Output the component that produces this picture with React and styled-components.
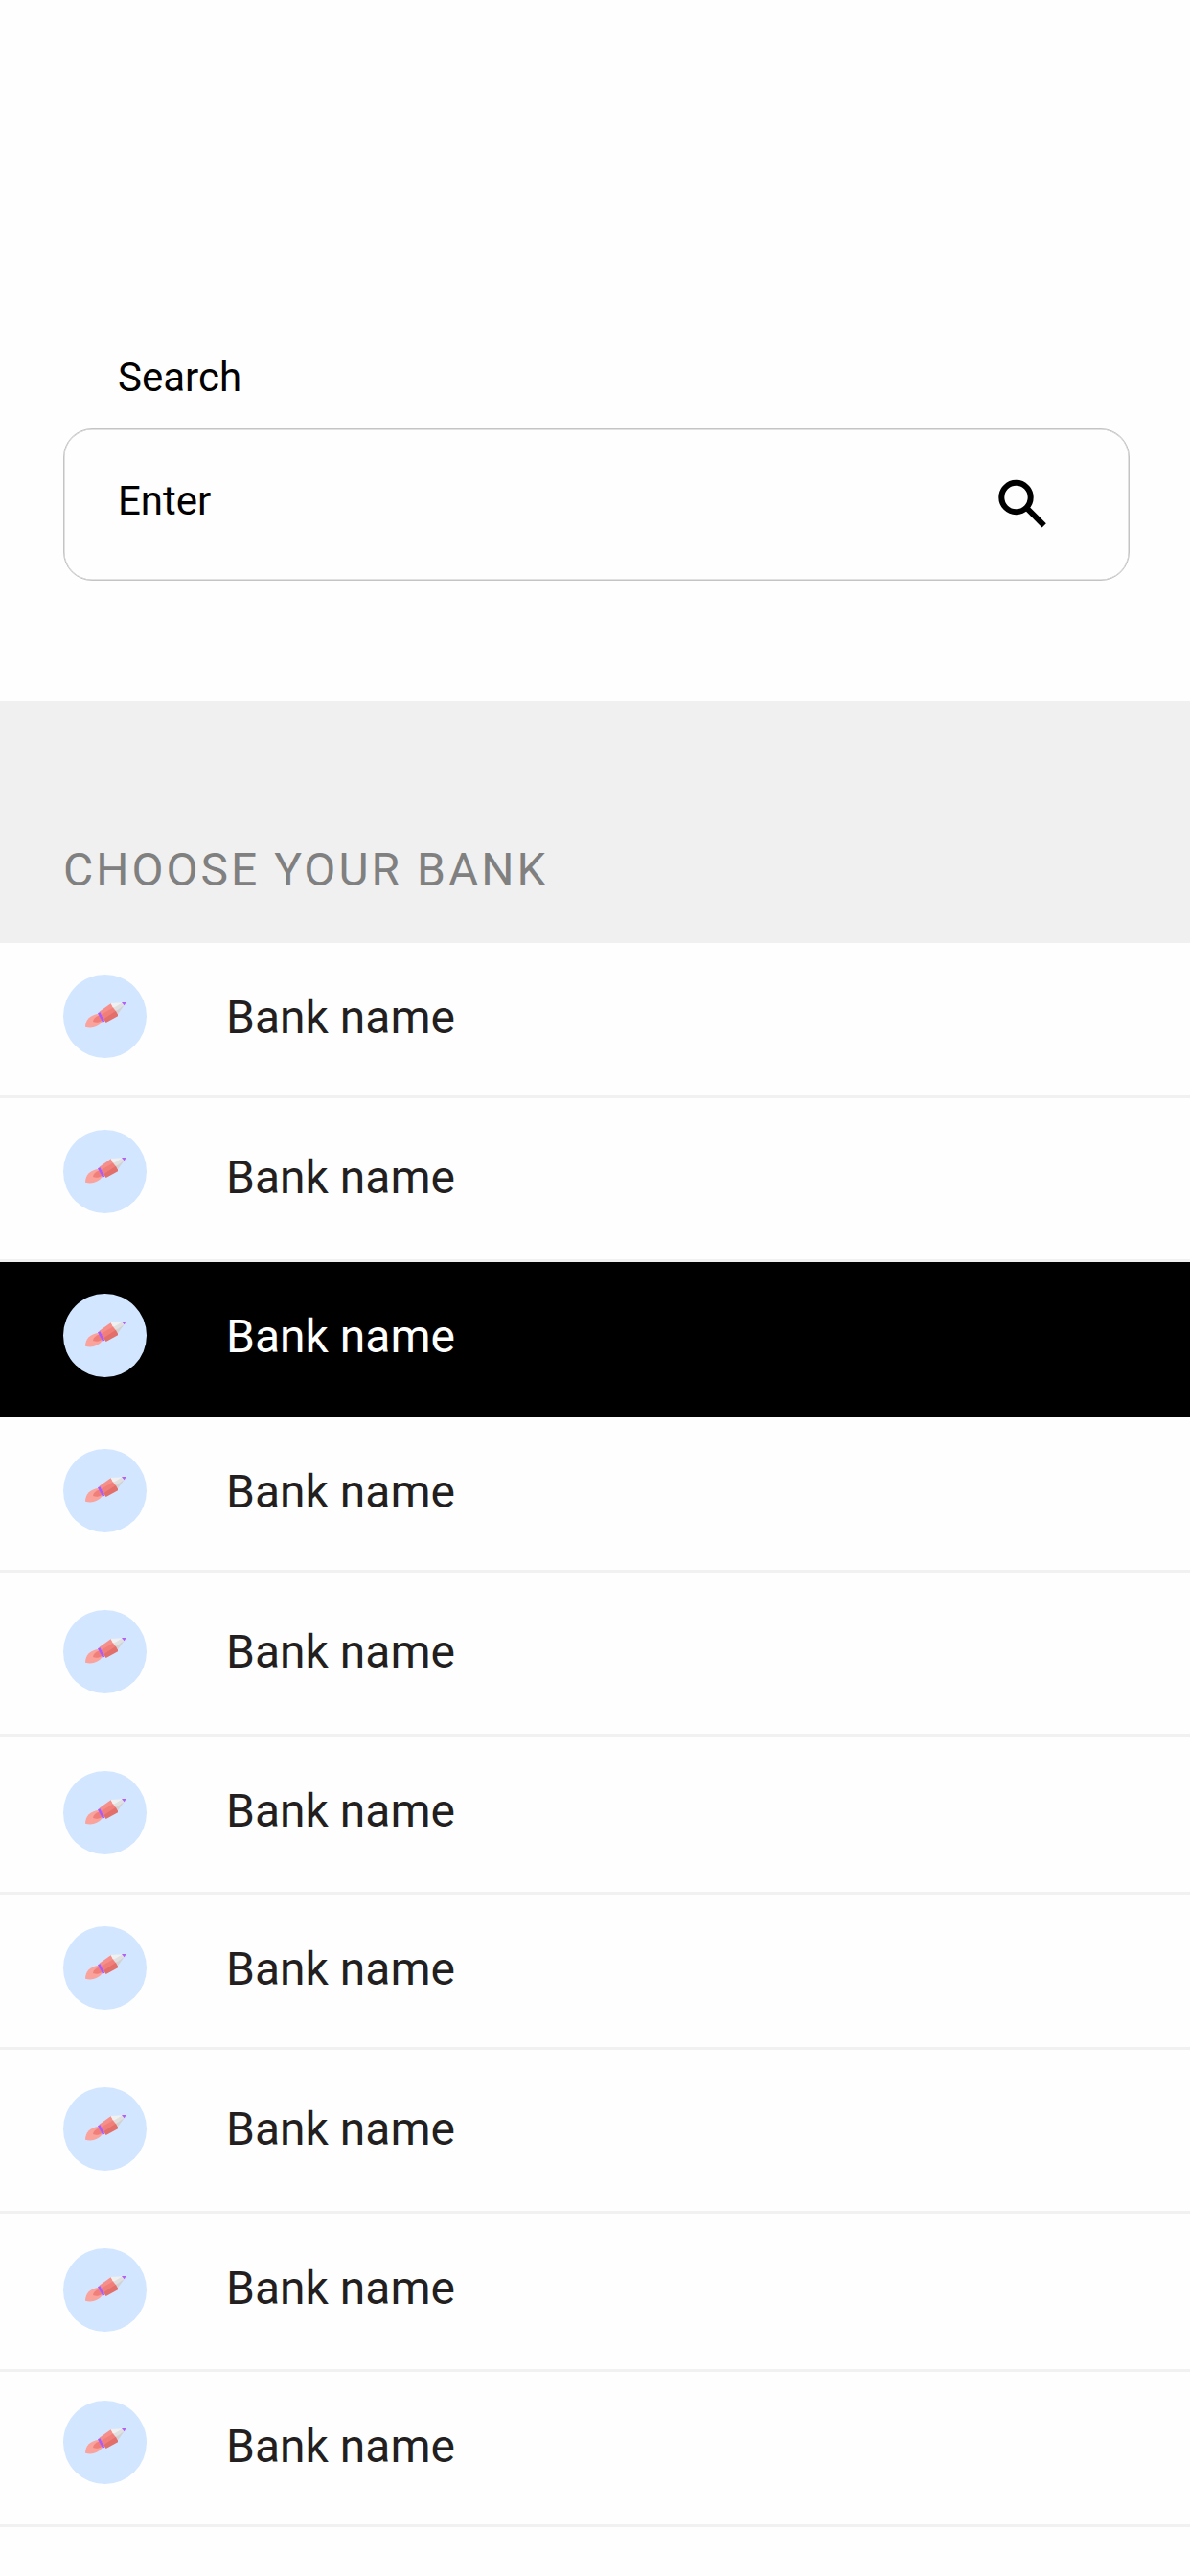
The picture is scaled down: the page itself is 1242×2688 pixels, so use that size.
import React from "react";
import styled, { createGlobalStyle } from "styled-components";

const GlobalStyle = createGlobalStyle`
  * { box-sizing: border-box; }
  html, body { margin: 0; background: #fefefe; }
  body { font-family: Roboto, "Liberation Sans", sans-serif; }
`;

const Screen = styled.main`
  display: flex;
  flex-direction: column;
  width: 1242px;
  height: 2688px;
  background: #fefefe;
  overflow: hidden;
`;

const SearchPanel = styled.section`
  display: flex;
  flex-direction: column;
  height: 732px;
  padding: 369px 63px 0 66px;
`;

const SearchLabel = styled.label`
  padding-left: 57px;
  font-size: 42px;
  line-height: 50px;
  color: #000;
`;

const SearchField = styled.div`
  display: flex;
  align-items: flex-start;
  justify-content: space-between;
  height: 159px;
  margin-top: 28px;
  padding: 47px 78px 0 56px;
  border: 1px solid #c4c4c4;
  border-radius: 30px;
  box-shadow: inset 0 0 0 0.5px #c4c4c4;
`;

const Placeholder = styled.span`
  margin-top: 3px;
  font-size: 42px;
  line-height: 50px;
  color: #000;
`;

const SearchIcon = styled.svg`
  display: block;
  width: 65px;
  height: 60px;
`;

const SectionHeader = styled.header`
  display: flex;
  height: 252px;
  padding: 148px 66px 0;
  background: #f0f0f0;
`;

const SectionTitle = styled.h1`
  margin: 0;
  font-size: 48px;
  font-weight: 400;
  line-height: 56px;
  letter-spacing: 3px;
  color: #808080;
`;

const BankList = styled.ul`
  display: flex;
  flex-direction: column;
  margin: 0;
  padding: 0;
  list-style: none;
`;

const BankRow = styled.li`
  display: flex;
  align-items: flex-start;
  gap: 83px;
  height: ${(p) => p.$height}px;
  padding-left: 66px;
  background: ${(p) => (p.$selected ? "#000" : "#fefefe")};
  color: ${(p) => (p.$selected ? "#fff" : "#231f20")};
  border-bottom: ${(p) => (p.$selected ? "none" : "3px solid #f1f1f1")};
`;

const Avatar = styled.span`
  display: block;
  width: 87px;
  height: 87px;
  margin-top: ${(p) => p.$top}px;
  border-radius: 50%;
  background: #d2e6ff;
`;

const RocketSvg = styled.svg`
  display: block;
  width: 87px;
  height: 87px;
`;

const BankName = styled.span`
  margin-top: ${(p) => p.$top}px;
  font-size: 48px;
  line-height: 56px;
`;

const banks = [
  { height: 162, icon: 33, text: 50 },
  { height: 171, icon: 33, text: 55 },
  { height: 162, icon: 33, text: 50, selected: true },
  { height: 162, icon: 33, text: 50 },
  { height: 171, icon: 39, text: 55 },
  { height: 165, icon: 36, text: 50 },
  { height: 162, icon: 33, text: 50 },
  { height: 171, icon: 39, text: 55 },
  { height: 165, icon: 36, text: 50 },
  { height: 162, icon: 30, text: 50 },
];

function Rocket() {
  return (
    <RocketSvg viewBox="-42 -39 261 261" aria-hidden="true">
      <path d="M27 125C27 101 43 87 68 83L80 109C67 125 47 131 27 125Z" fill="#faa29c" />
      <path d="M51 108C52 99 60 92 71 88L79 105C70 111 60 112 51 108Z" fill="#f07f7a" />
      <path d="M71 77L107 52L116 66L78 88Z" fill="#f68e8a" />
      <path d="M76 86L116 64L127 76L86 103Z" fill="#f07f7a" />
      <path d="M84 100L123 74L129 85L129 91L92 111Z" fill="#e36f6b" />
      <path d="M107 51L144 49L118 66L113 64Z" fill="#f0f0f0" />
      <path d="M115 66L144 49L149 57L123 76Z" fill="#e0e0e0" />
      <path d="M123 75L149 57L129 85Z" fill="#d2d2d2" />
      <path d="M141 48L155 48L149 58Z" fill="#b35ef8" />
      <path d="M66 82L73 78L88 107L81 110Z" fill="#a95cf8" />
    </RocketSvg>
  );
}

export default function App() {
  return (
    <>
      <GlobalStyle />
      <Screen>
        <SearchPanel>
          <SearchLabel>Search</SearchLabel>
          <SearchField>
            <Placeholder>Enter</Placeholder>
            <SearchIcon viewBox="0 0 65 60" aria-hidden="true">
              <g fill="none" stroke="#000" strokeWidth="6">
                <circle cx="25.5" cy="24" r="15.2" />
                <path d="M36.5 35L54.7 53.4" />
              </g>
            </SearchIcon>
          </SearchField>
        </SearchPanel>
        <SectionHeader>
          <SectionTitle>CHOOSE YOUR BANK</SectionTitle>
        </SectionHeader>
        <BankList>
          {banks.map((bank, i) => (
            <BankRow key={i} $height={bank.height} $selected={bank.selected}>
              <Avatar $top={bank.icon}>
                <Rocket />
              </Avatar>
              <BankName $top={bank.text}>Bank name</BankName>
            </BankRow>
          ))}
        </BankList>
      </Screen>
    </>
  );
}
